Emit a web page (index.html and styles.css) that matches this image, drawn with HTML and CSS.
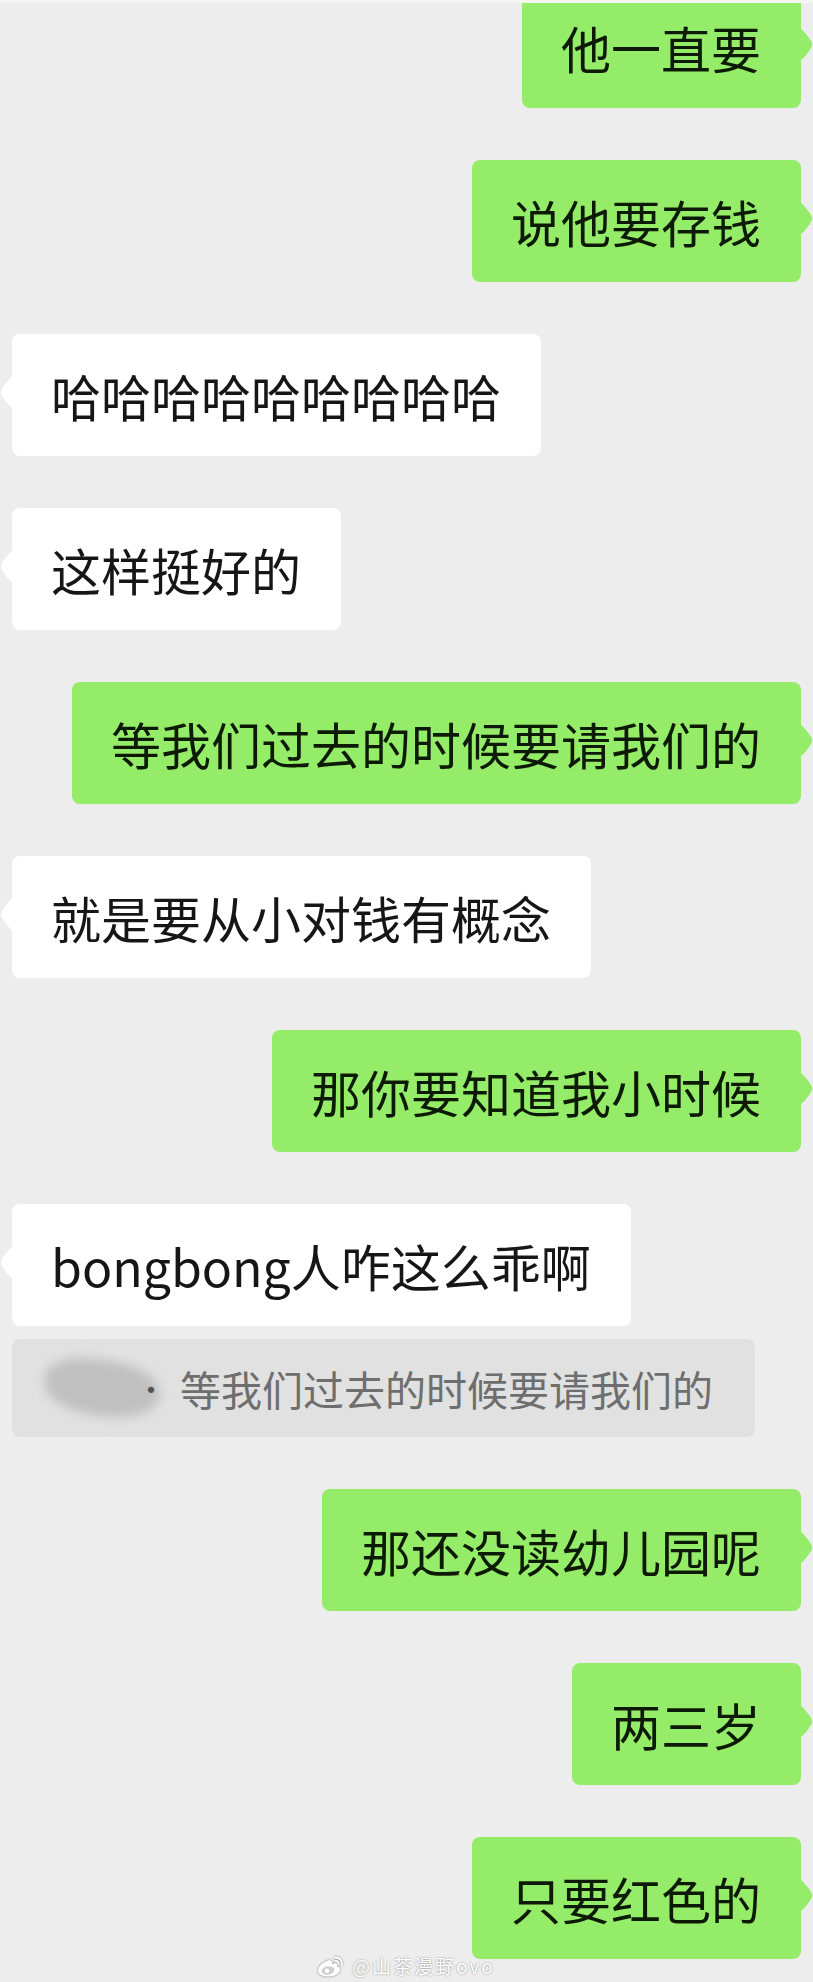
FILE: index.html
```html
<!DOCTYPE html>
<html lang="zh-CN">
<head>
  <meta charset="UTF-8" />
  <meta name="viewport" content="width=device-width, initial-scale=1.0"/>
  <title>聊天记录</title>
  <link rel="stylesheet" href="styles.css">
</head>
<body>

<div class="topline"></div>

<div class="chat">
  <div class="row me first"><div class="bubble">他一直要</div></div>
  <div class="row me"><div class="bubble">说他要存钱</div></div>
  <div class="row them"><div class="bubble">哈哈哈哈哈哈哈哈哈</div></div>
  <div class="row them"><div class="bubble">这样挺好的</div></div>
  <div class="row me"><div class="bubble">等我们过去的时候要请我们的</div></div>
  <div class="row them"><div class="bubble">就是要从小对钱有概念</div></div>
  <div class="row me"><div class="bubble">那你要知道我小时候</div></div>
  <div class="row them"><div class="bubble">bongbong人咋这么乖啊</div></div>
  <div class="quote">
    <span class="quote-name"></span>
    <span class="quote-dot">·</span>
    <span class="quote-text">等我们过去的时候要请我们的</span>
  </div>
  <div class="row me"><div class="bubble">那还没读幼儿园呢</div></div>
  <div class="row me"><div class="bubble">两三岁</div></div>
  <div class="row me"><div class="bubble">只要红色的</div></div>
</div>

<div class="watermark">
  <svg class="weibo" width="30" height="24" viewBox="0 0 30 24">
    <path d="M12 6.5 C7 8 2 12.5 2 16.5 C2 20.5 7 22.5 12.5 22.5 C19 22.5 24 19 24 15.5 C24 13.5 22.5 12.5 21 12.8 C21.8 10.8 21.5 9 19 9.3 C17.5 9.5 16 10.3 16 10.3 C16.5 8 15.5 5.8 12 6.5 Z" fill="#fff"/>
    <ellipse cx="12" cy="16.5" rx="6.5" ry="4.2" fill="#cfcfcf" transform="rotate(-10 12 16.5)"/>
    <circle cx="11" cy="16.8" r="2.2" fill="#fff"/>
    <path d="M19 3.5 C23 3 26.5 6.5 25.8 10.5" stroke="#fff" stroke-width="2" fill="none" stroke-linecap="round"/>
    <path d="M19.5 7 C21.5 6.8 22.8 8.3 22.5 10" stroke="#fff" stroke-width="1.8" fill="none" stroke-linecap="round"/>
  </svg>
  <span>@山茶漫野ovo</span>
</div>

</body>
</html>
```

FILE: styles.css
```css
body {
  margin: 0;
  background: #ededed;
  font-family: "Noto Sans CJK SC", "Noto Sans", sans-serif;
  color: #111;
}

.topline {
  height: 3px;
  background: #f4f4f4;
}

.chat {
  overflow: hidden;
  padding-bottom: 23px;
}

.row {
  display: flex;
  padding: 0 12px;
  margin-top: 52px;
}

.row.first {
  margin-top: -17px;
}

.row.me {
  justify-content: flex-end;
}

.row.them {
  justify-content: flex-start;
}

.bubble {
  position: relative;
  padding: 26px 40px 26px 39px;
  font-size: 50px;
  line-height: 70px;
  border-radius: 8px;
  white-space: nowrap;
}

.me .bubble {
  background: #95ec69;
  color: #0c1a06;
}

.them .bubble {
  background: #fff;
  color: #161616;
}

.bubble::after {
  content: "";
  position: absolute;
  top: 42px;
  width: 13px;
  height: 33px;
}

.me .bubble::after {
  right: -12px;
  background: #95ec69;
  clip-path: path("M0 0 C4 3 7 7 11 13 Q13.5 16.5 11 20 C7 26 4 30 0 33 Z");
}

.them .bubble::after {
  left: -12px;
  background: #fff;
  clip-path: path("M13 0 C9 3 6 7 2 13 Q-0.5 16.5 2 20 C6 26 9 30 13 33 Z");
}

.quote {
  display: flex;
  align-items: center;
  width: 743px;
  height: 98px;
  margin: 13px 0 0 12px;
  background: #e1e1e1;
  border-radius: 8px;
  box-sizing: border-box;
  padding-left: 28px;
}

.quote-name {
  width: 118px;
  height: 58px;
  border-radius: 40% 50% 45% 50%;
  background: #c0c0c0;
  border: 3px solid #ececec;
  filter: blur(6px);
  transform: rotate(6deg);
  margin-right: -28px;
}

.quote-dot {
  position: relative;
  font-size: 30px;
  color: #555;
  width: 26px;
  text-align: center;
  margin-right: 18px;
}

.quote-text {
  font-size: 41px;
  color: #6e6e6e;
  white-space: nowrap;
}

.watermark {
  position: absolute;
  left: 316px;
  top: 1952px;
  display: flex;
  align-items: center;
  gap: 6px;
  color: #fff;
  font-size: 19px;
  letter-spacing: 2px;
  text-shadow: 0 0 2px rgba(0, 0, 0, 0.45);
}

.weibo {
  filter: drop-shadow(0 0 1px rgba(0, 0, 0, 0.5));
}
```
